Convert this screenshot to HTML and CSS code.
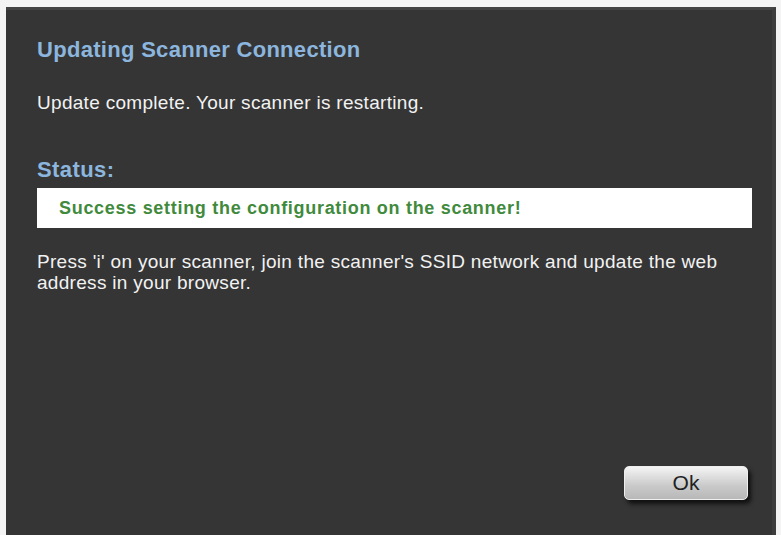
FILE: index.html
```html
<!DOCTYPE html>
<html lang="en">
  <head>
    <meta charset="UTF-8" />
    <meta name="viewport" content="width=device-width, initial-scale=1.0" />
    <title>Updating Scanner Connection</title>
    <link rel="stylesheet" href="styles.css">
  </head>
  <body>
    <div class="dialog">
      <h1>Updating Scanner Connection</h1>
      <p class="message">Update complete. Your scanner is restarting.</p>

      <h2>Status:</h2>
      <div class="status-box">Success setting the configuration on the scanner!</div>

      <p class="message note">
        Press 'i' on your scanner, join the scanner's SSID network and update the web
        address in your browser.
      </p>

      <div class="actions">
        <button class="ok-button">Ok</button>
      </div>
    </div>
  </body>
</html>
```

FILE: styles.css
```css
html,
body {
  height: 100%;
}
body {
  margin: 0;
  padding: 7px 5px 0 6px;
  box-sizing: border-box;
  background: #f4f4f4;
  font-family: "Liberation Sans", Arial, sans-serif;
  overflow: hidden;
}
.dialog {
  box-sizing: border-box;
  height: 528px;
  background: #353535;
  border-top: 3px solid #444;
  border-right: 4px solid #3d3d3d;
  padding: 27px 20px 0 31px;
  display: flex;
  flex-direction: column;
}
h1 {
  margin: 0;
  color: #8cb6de;
  font-size: 22px;
  letter-spacing: 0.3px;
  line-height: 26px;
}
h2 {
  margin: 43px 0 0;
  color: #8cb6de;
  font-size: 22px;
  letter-spacing: 0.4px;
  line-height: 26px;
}
.message {
  margin: 29px 0 0;
  color: #f2f2f2;
  font-size: 19px;
  letter-spacing: 0.3px;
  line-height: 22px;
}
.status-box {
  margin-top: 5px;
  background: #fff;
  color: #3f8a3c;
  font-size: 18px;
  font-weight: bold;
  letter-spacing: 0.7px;
  line-height: 40px;
  padding-left: 22px;
}
.note {
  margin-top: 23px;
  letter-spacing: 0.3px;
  line-height: 21px;
}
.actions {
  display: flex;
  justify-content: flex-end;
  margin-top: 173px;
  padding-right: 4px;
}
.ok-button {
  width: 124px;
  height: 34px;
  border: 1px solid #eee;
  border-radius: 5px;
  background: linear-gradient(#f4f4f4, #c9c9c9 60%, #b8b8b8);
  box-shadow: 3px 4px 4px #111;
  font-family: "Liberation Sans", Arial, sans-serif;
  font-size: 21px;
  color: #222;
  cursor: pointer;
}
```
